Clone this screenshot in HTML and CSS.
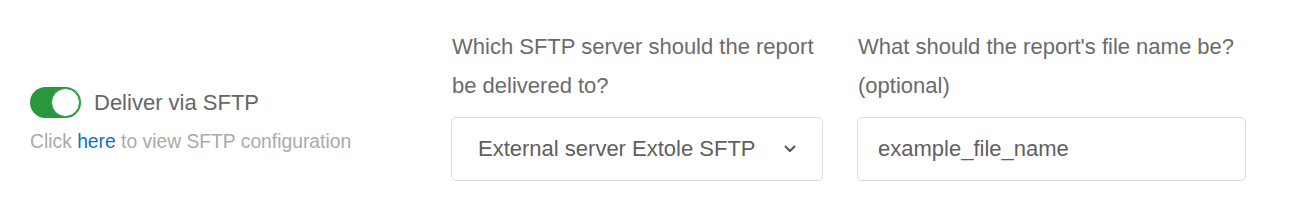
FILE: index.html
```html
<!DOCTYPE html>
<html lang="en">
<head>
    <meta charset="UTF-8">
    <meta name="viewport" content="width=device-width, initial-scale=1.0">
    <title>SFTP Delivery</title>
    <link rel="stylesheet" href="styles.css">
</head>
<body>
    <div class="delivery-row">
        <!-- Toggle column -->
        <div class="toggle-col">
            <label class="toggle-line">
                <span class="switch on"><span class="knob"></span></span>
                <span class="toggle-label">Deliver via SFTP</span>
            </label>
            <div class="hint">Click <a href="#">here</a> to view SFTP configuration</div>
        </div>

        <!-- Server select -->
        <div class="field server-field">
            <div class="field-label">Which SFTP server should the report be delivered to?</div>
            <div class="select-box">
                <span>External server Extole SFTP</span>
                <svg class="chevron" width="12" height="8" viewBox="0 0 12 8">
                    <path d="M1.5 1.5 L6 6 L10.5 1.5" fill="none" stroke="#555" stroke-width="2" stroke-linecap="round" stroke-linejoin="round"/>
                </svg>
            </div>
        </div>

        <!-- File name -->
        <div class="field name-field">
            <div class="field-label">What should the report's file name be? (optional)</div>
            <input class="text-input" type="text" value="example_file_name">
        </div>
    </div>
</body>
</html>
```

FILE: styles.css
```css
body {
    margin: 0;
    background-color: #fff;
    font-family: "Liberation Sans", Arial, sans-serif;
}

/* Main row */
.delivery-row {
    display: flex;
    padding: 27px 0 0 30px;
}

/* Left column with toggle */
.toggle-col {
    width: 421px;
    padding-top: 60px;
}

.toggle-line {
    display: flex;
    align-items: center;
    cursor: pointer;
}

.switch {
    position: relative;
    width: 51px;
    height: 31px;
    border-radius: 16px;
    background-color: #2a973d;
    flex-shrink: 0;
}

.switch .knob {
    position: absolute;
    top: 1px;
    right: 1px;
    width: 27px;
    height: 27px;
    border-radius: 50%;
    background-color: #fff;
    border: 1px solid #2a973d;
    box-sizing: content-box;
}

.toggle-label {
    margin-left: 13px;
    font-size: 22px;
    color: #666;
}

.hint {
    margin-top: 13px;
    font-size: 19.3px;
    color: #aaa;
}

.hint a {
    color: #1270c4;
    text-decoration: none;
}

/* Form fields */
.field-label {
    font-size: 22px;
    line-height: 39px;
    color: #6b6b6b;
    margin-left: 1px;
    margin-bottom: 12px;
}

.server-field {
    width: 372px;
    margin-right: 34px;
}

.name-field {
    width: 389px;
}

.select-box {
    display: flex;
    align-items: center;
    justify-content: space-between;
    height: 64px;
    box-sizing: border-box;
    padding: 0 26px 0 26px;
    border: 1px solid #dcdcdc;
    border-radius: 5px;
    font-size: 22px;
    color: #5f5f5f;
}

.text-input {
    display: block;
    width: 100%;
    height: 64px;
    box-sizing: border-box;
    padding: 0 20px;
    border: 1px solid #dcdcdc;
    border-radius: 5px;
    font-family: "Liberation Sans", Arial, sans-serif;
    font-size: 22px;
    color: #5f5f5f;
    outline: none;
}
```
